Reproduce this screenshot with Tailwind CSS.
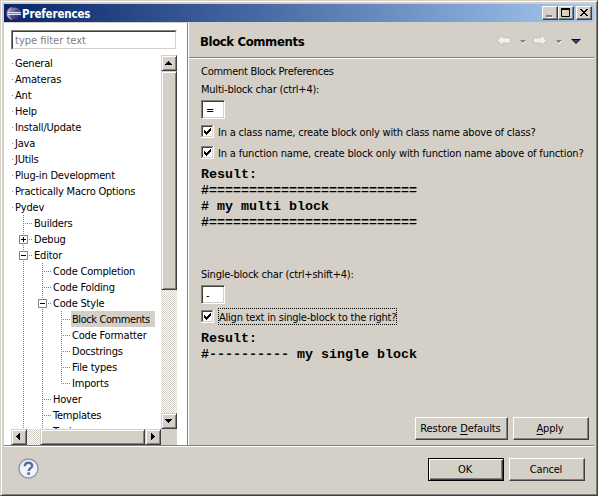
<!DOCTYPE html>
<html lang="en">
<head>
<meta charset="utf-8">
<title>Preferences</title>
<script src="https://cdn.jsdelivr.net/npm/@tailwindcss/browser@4"></script>
</head>
<body class="w-[598px] h-[496px] overflow-hidden bg-[#d4d0c8] text-black text-[11px] leading-[18px] tracking-[-0.2px] whitespace-nowrap font-['DejaVu_Sans_Condensed','DejaVu_Sans',sans-serif]">
<div class="w-[598px] h-[496px] border border-t-[#d4d0c8] border-l-[#d4d0c8] border-r-[#404040] border-b-[#404040] shadow-[inset_1px_1px_0_#fff,inset_-1px_-1px_0_#808080] p-[3px] flex flex-col">

  <!-- Title bar -->
  <header class="h-[18px] w-[590px] shrink-0 flex items-center bg-linear-to-r from-[#0a246a] to-[#a6caf0] pl-[2px] pr-[2px]">
    <svg width="16" height="16" viewBox="0 0 16 16" class="shrink-0">
      <defs><linearGradient id="orb" x1="0" y1="0" x2="1" y2="1"><stop offset="0" stop-color="#b3a3cd"/><stop offset=".45" stop-color="#5b4f92"/><stop offset="1" stop-color="#251f5c"/></linearGradient></defs>
      <path d="M7 2A6 6 0 0 0 7 15A8 8 0 0 1 7 2Z" fill="#c09abb"/>
      <circle cx="9" cy="8.5" r="6" fill="url(#orb)"/>
      <path d="M2 7.500H15M2 9.500H15" stroke="#dfe6f6"/><path d="M3 8.500H14.500" stroke="#7c86bd"/>
    </svg>
    <h1 class="flex-1 mt-[2px] text-white font-bold text-[11.5px] tracking-[-0.15px]">Preferences</h1>
    <div class="flex">
      <div class="w-4 h-[14px] bg-[#d4d0c8] border border-t-white border-l-white border-r-[#404040] border-b-[#404040] shadow-[inset_-1px_-1px_0_#808080]"><svg width="14" height="12"><path d="M4 10.500H10" stroke="#fff"/><path d="M3 9H9" stroke="#808080" stroke-width="2"/></svg></div>
      <div class="w-4 h-[14px] bg-[#d4d0c8] border border-t-white border-l-white border-r-[#404040] border-b-[#404040] shadow-[inset_-1px_-1px_0_#808080]"><svg width="14" height="12"><path d="M2 2H11" stroke="#000" stroke-width="2"/><path d="M2.500 2V9.500H10.500V2" fill="none" stroke="#000"/></svg></div>
      <div class="ml-[2px] w-4 h-[14px] bg-[#d4d0c8] border border-t-white border-l-white border-r-[#404040] border-b-[#404040] shadow-[inset_-1px_-1px_0_#808080]"><svg width="14" height="12" shape-rendering="crispEdges"><path d="M3 2h2v1h1v1h2v-1h1v-1h2v1h-1v1h-1v1h-1v1h1v1h1v1h1v1h-2v-1h-1v-1h-2v1h-1v1h-2v-1h1v-1h1v-1h1v-1h-1v-1h-1v-1h-1z"/></svg></div>
    </div>
  </header>

  <main class="mt-px h-[422px] shrink-0 flex">
    <!-- Page list -->
    <nav class="w-[184px] h-[422px] bg-white border-r border-[#808080] pl-[7px] pt-[7px]">
      <div class="w-[166px] h-5 border border-t-[#808080] border-l-[#808080] border-r-white border-b-white">
        <div class="w-[164px] h-[18px] border border-t-[#404040] border-l-[#404040] border-r-[#d4d0c8] border-b-[#d4d0c8] pl-[2px] text-[#808080] tracking-[0px]">type filter text</div>
      </div>
      <div class="mt-[5px] flex">
        <div>
          <div id="tree" class="w-[150px] h-[374px] overflow-hidden"></div>
          <div class="w-[150px] h-4 flex bg-[repeating-conic-gradient(#fff_0_25%,#d4d0c8_0_50%)] bg-[length:2px_2px]">
            <div class="w-4 h-4 bg-[#d4d0c8] border border-t-[#d4d0c8] border-l-[#d4d0c8] border-r-[#404040] border-b-[#404040] shadow-[inset_1px_1px_0_#fff,inset_-1px_-1px_0_#808080]"><svg width="14" height="14" shape-rendering="crispEdges"><path d="M8 3v7h-1v-1h-1v-1h-1v-1h-1v-1h1v-1h1v-1h1v-1z"/></svg></div>
            <div class="ml-[13px] w-[105px] h-4 bg-[#d4d0c8] border border-t-[#d4d0c8] border-l-[#d4d0c8] border-r-[#404040] border-b-[#404040] shadow-[inset_1px_1px_0_#fff,inset_-1px_-1px_0_#808080]"></div>
            <div class="w-4 h-4 bg-[#d4d0c8] border border-t-[#d4d0c8] border-l-[#d4d0c8] border-r-[#404040] border-b-[#404040] shadow-[inset_1px_1px_0_#fff,inset_-1px_-1px_0_#808080]"><svg width="14" height="14" shape-rendering="crispEdges"><path d="M5 3v7h1v-1h1v-1h1v-1h1v-1h-1v-1h-1v-1h-1v-1z"/></svg></div>
          </div>
        </div>
        <div class="w-4 h-[390px] bg-[#d4d0c8]">
          <div class="w-4 h-[374px] flex flex-col justify-between bg-[repeating-conic-gradient(#fff_0_25%,#d4d0c8_0_50%)] bg-[length:2px_2px]">
            <div>
              <div class="w-4 h-4 bg-[#d4d0c8] border border-t-[#d4d0c8] border-l-[#d4d0c8] border-r-[#404040] border-b-[#404040] shadow-[inset_1px_1px_0_#fff,inset_-1px_-1px_0_#808080]"><svg width="14" height="14" shape-rendering="crispEdges"><path d="M3 9h7v-1h-1v-1h-1v-1h-1v-1h-1v1h-1v1h-1v1h-1z"/></svg></div>
              <div class="w-4 h-[219px] bg-[#d4d0c8] border border-t-[#d4d0c8] border-l-[#d4d0c8] border-r-[#404040] border-b-[#404040] shadow-[inset_1px_1px_0_#fff,inset_-1px_-1px_0_#808080]"></div>
            </div>
            <div class="w-4 h-4 bg-[#d4d0c8] border border-t-[#d4d0c8] border-l-[#d4d0c8] border-r-[#404040] border-b-[#404040] shadow-[inset_1px_1px_0_#fff,inset_-1px_-1px_0_#808080]"><svg width="14" height="14" shape-rendering="crispEdges"><path d="M3 5h7v1h-1v1h-1v1h-1v1h-1v-1h-1v-1h-1v-1h-1z"/></svg></div>
          </div>
        </div>
      </div>
    </nav>

    <!-- Preference page -->
    <section class="w-[406px] h-[422px] border-l border-white flex flex-col">
      <div class="h-9 shrink-0 border-b border-white shadow-[inset_0_-1px_0_#808080] pl-[11px] pr-[11px] flex items-center justify-between">
        <h2 class="mt-[2px] text-[13px] font-bold tracking-[-0.38px]">Block Comments</h2>
        <svg width="86" height="14" viewBox="0 0 86 14" class="mt-px">
          <defs><linearGradient id="pale" x1="0" y1="0" x2="0" y2="1"><stop offset="0" stop-color="#fff"/><stop offset="1" stop-color="#e4e2dc"/></linearGradient></defs>
          <path d="M.5 6.500L6 1V4H13.500V9H6V12Z" fill="url(#pale)" stroke="#bfbcb5" stroke-width=".8"/>
          <path d="M25 7h4v1h-1v1h-1v1h-1" fill="#fff"/><path d="M23 6h6l-3 3z" fill="#808080"/>
          <path d="M49.500 6.500L44 1V4H36.500V9H44V12Z" fill="url(#pale)" stroke="#bfbcb5" stroke-width=".8"/>
          <path d="M61 7h4v1h-1v1h-1v1h-1" fill="#fff"/><path d="M59 6h6l-3 3z" fill="#808080"/>
          <path d="M74 5h10l-5 5z" fill="#0a0a28"/><path d="M76 6h6l-3 3z" fill="#4a4787"/>
        </svg>
      </div>
      <div class="flex-1 pl-3 flex flex-col items-start">
        <p class="mt-[4px] h-4 tracking-[-0.28px]">Comment Block Preferences</p>
        <label class="mt-[2px] h-4 tracking-[-0.22px]">Multi-block char (ctrl+4):</label>
        <div class="mt-[3px] w-6 h-[19px] bg-white border border-t-[#808080] border-l-[#808080] border-r-white border-b-white shadow-[inset_1px_1px_0_#404040,inset_-1px_-1px_0_#d4d0c8] pl-[4px] leading-[19px]">=</div>
        <div class="mt-[4px] h-[17px] flex items-center"><svg width="13" height="13" class="mr-[4px]" shape-rendering="crispEdges"><path d="M0 0h13v13h-13z" fill="#fff"/><path d="M0 0h12v1h-11v11h-1z" fill="#808080"/><path d="M1 1h10v1h-9v9h-1z" fill="#404040"/><path d="M11 1h1v11h-11v-1h10z" fill="#d4d0c8"/><path d="M3 5h1v1h1v1h1v-1h1v-1h1v-1h1v-1h1v3h-1v1h-1v1h-1v1h-1v1h-1v-1h-1v-1h-1z"/></svg><span class="mt-[2px] tracking-[-0.2px]">In a class name, create block only with class name above of class?</span></div>
        <div class="mt-[4px] h-[17px] flex items-center"><svg width="13" height="13" class="mr-[4px]" shape-rendering="crispEdges"><path d="M0 0h13v13h-13z" fill="#fff"/><path d="M0 0h12v1h-11v11h-1z" fill="#808080"/><path d="M1 1h10v1h-9v9h-1z" fill="#404040"/><path d="M11 1h1v11h-11v-1h10z" fill="#d4d0c8"/><path d="M3 5h1v1h1v1h1v-1h1v-1h1v-1h1v-1h1v3h-1v1h-1v1h-1v1h-1v1h-1v-1h-1v-1h-1z"/></svg><span class="mt-[2px] tracking-[-0.17px]">In a function name, create block only with function name above of function?</span></div>
        <pre class="mt-[6px] h-16 font-bold text-[13.33px] leading-[16px] tracking-normal font-['Liberation_Mono',monospace]">Result:
#==========================
# my multi block
#==========================</pre>
        <label class="mt-[35px] h-4 tracking-[-0.22px]">Single-block char (ctrl+shift+4):</label>
        <div class="mt-[3px] w-6 h-[19px] bg-white border border-t-[#808080] border-l-[#808080] border-r-white border-b-white shadow-[inset_1px_1px_0_#404040,inset_-1px_-1px_0_#d4d0c8] pl-[4px] leading-[19px]">-</div>
        <div class="mt-[4px] h-[17px] flex items-center"><svg width="13" height="13" class="mr-[4px]" shape-rendering="crispEdges"><path d="M0 0h13v13h-13z" fill="#fff"/><path d="M0 0h12v1h-11v11h-1z" fill="#808080"/><path d="M1 1h10v1h-9v9h-1z" fill="#404040"/><path d="M11 1h1v11h-11v-1h10z" fill="#d4d0c8"/><path d="M3 5h1v1h1v1h1v-1h1v-1h1v-1h1v-1h1v3h-1v1h-1v1h-1v1h-1v1h-1v-1h-1v-1h-1z"/></svg><span class="w-[179px] h-[17px] border border-dotted border-black leading-[17px] tracking-[-0.22px]">Align text in single-block to the right?</span></div>
        <pre class="mt-[6px] h-8 font-bold text-[13.33px] leading-[16px] tracking-normal font-['Liberation_Mono',monospace]">Result:
#---------- my single block</pre>
      </div>
      <div class="h-[28px] shrink-0 flex justify-end gap-[5px] pr-[5px] text-center">
        <button class="w-[93px] h-[23px] border border-t-white border-l-white border-r-[#404040] border-b-[#404040] shadow-[inset_-1px_-1px_0_#808080] leading-[20px] pr-[2px] tracking-[-0.1px]">Restore <span class="underline underline-offset-2">D</span>efaults</button>
        <button class="w-[76px] h-[23px] border border-t-white border-l-white border-r-[#404040] border-b-[#404040] shadow-[inset_-1px_-1px_0_#808080] leading-[20px] pr-[2px]"><span class="underline underline-offset-2">A</span>pply</button>
      </div>
    </section>
  </main>

  <!-- Dialog buttons -->
  <footer class="w-[590px] flex-1 border-t border-[#808080] shadow-[inset_0_1px_0_#fff] flex justify-between pl-[14px] pr-[9px] pt-3">
    <svg width="21" height="21" viewBox="0 0 21 21" class="mt-0">
      <circle cx="10.500" cy="10.500" r="9.500" fill="#f2f3f6" stroke="#8a97b0" stroke-width="1.400"/>
      <path d="M6.800 8.200C6.800 3.600 14.300 3.700 14.200 7.800C14.100 10.100 10.700 10.200 10.700 12.900" fill="none" stroke="#536c9c" stroke-width="2.400"/>
      <path d="M9.300 14.400h2.700v2.400h-2.700z" fill="#536c9c"/>
    </svg>
    <div class="flex gap-[5px] text-center">
      <button class="w-[76px] h-[23px] border border-black shadow-[inset_1px_1px_0_#fff,inset_-1px_-1px_0_#404040,inset_-2px_-2px_0_#808080] leading-[20px] pr-[2px]">OK</button>
      <button class="w-[76px] h-[23px] border border-t-white border-l-white border-r-[#404040] border-b-[#404040] shadow-[inset_-1px_-1px_0_#808080] leading-[20px] pr-[2px]">Cancel</button>
    </div>
  </footer>
</div>

<script>
// Each entry: guide cells, label, selected. Cells: | line, t tee, L last child, + closed node, - open node.
const rows = [['', 'General'], ['', 'Amateras'], ['', 'Ant'], ['', 'Help'], ['', 'Install/Update'], ['', 'Java'], ['', 'JUtils'],
  ['', 'Plug-in Development'], ['', 'Practically Macro Options'], ['', 'Pydev'], ['t', 'Builders'], ['+', 'Debug'], ['-', 'Editor'],
  ['|t', 'Code Completion'], ['|t', 'Code Folding'], ['|-', 'Code Style'], ['||t', 'Block Comments', true], ['||t', 'Code Formatter'],
  ['||t', 'Docstrings'], ['||t', 'File types'], ['||L', 'Imports'], ['|t', 'Hover'], ['|t', 'Templates'], ['|t', 'Typing']];
const cell = c => {
  let s = `<path d="M9.5 0V${c === 'L' ? 9 : 16}" stroke="#808080" stroke-dasharray="1 1"/>`;
  if (c !== '|') s += '<path d="M9 8.5H18" stroke="#808080" stroke-dasharray="1 1"/>';
  if (c === '+' || c === '-') s += '<path d="M5.5 4.5h8v8h-8z" fill="#fff" stroke="#808080"/><path d="M7 8.5H12" stroke="#000"/>';
  if (c === '+') s += '<path d="M9.5 6V11" stroke="#000"/>';
  return `<svg width="19" height="16" class="shrink-0">${s}</svg>`;
};
document.getElementById('tree').innerHTML = rows.map(([g, label, sel]) =>
  `<div class="h-4 flex">${g ? '<span class="w-[3px] shrink-0"></span>' : '<svg width="3" height="16" class="shrink-0"><path d="M1 8.500h1" stroke="#808080"/></svg>'}${[...g].map(cell).join('')}<span class="${sel ? 'w-[84px] h-4 bg-[#d4d0c8] pl-px tracking-[-0.42px]' : 'pl-px tracking-[-0.2px]'}">${label}</span></div>`).join('');
</script>
</body>
</html>
